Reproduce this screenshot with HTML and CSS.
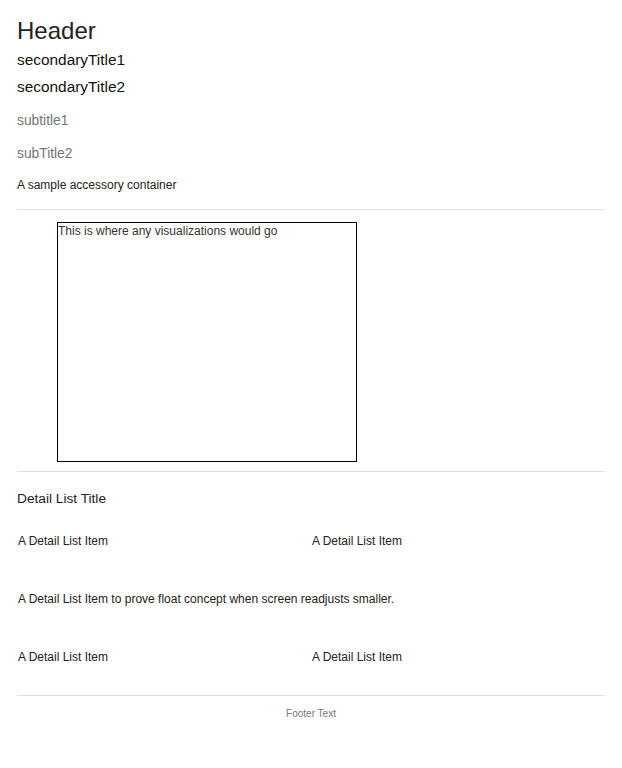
FILE: index.html
```html
<!DOCTYPE html>
<html>
<head>
<meta charset="utf-8">
<link rel="stylesheet" href="styles.css">
</head>
<body>
<div class="page">
  <header class="head">
    <h1 class="title">Header</h1>
    <div class="secondary first">secondaryTitle1</div>
    <div class="secondary">secondaryTitle2</div>
    <div class="subtitle sub1">subtitle1</div>
    <div class="subtitle sub2">subTitle2</div>
    <div class="accessory">A sample accessory container</div>
  </header>
  <hr class="rule rule-top">
  <div class="viz">This is where any visualizations would go</div>
  <hr class="rule rule-mid">
  <section class="details">
    <h2 class="detail-title">Detail List Title</h2>
    <div class="detail-list">
      <div class="item">A Detail List Item</div>
      <div class="item">A Detail List Item</div>
      <div class="item wide">A Detail List Item to prove float concept when screen readjusts smaller.</div>
      <div class="item">A Detail List Item</div>
      <div class="item">A Detail List Item</div>
    </div>
  </section>
  <hr class="rule rule-bottom">
  <footer class="footer">Footer Text</footer>
</div>
</body>
</html>
```
FILE: styles.css
```css
html, body {
  margin: 0;
  padding: 0;
  background: #fff;
}
body {
  font-family: "Liberation Sans", Arial, sans-serif;
  color: #222;
}
.page {
  padding: 17px 17px 0 17px;
}
.head {
  display: flex;
  flex-direction: column;
}
.title {
  margin: 0;
  font-size: 24px;
  font-weight: normal;
  line-height: 28px;
  color: #222;
}
.secondary {
  font-size: 15.4px;
  line-height: 27px;
  color: #111;
}
.secondary.first { margin-top: 1px; }
.subtitle {
  font-size: 13.8px;
  line-height: 20px;
  color: #757575;
}
.sub1 { margin-top: 11px; }
.sub2 { margin-top: 13px; }
.accessory {
  margin-top: 13px;
  font-size: 12px;
  line-height: 16px;
  color: #222;
}
.rule {
  border: 0;
  border-top: 1px solid #e0e0e0;
  margin: 0;
  height: 0;
}
.rule-top { margin-top: 16px; }
.viz {
  box-sizing: border-box;
  width: 300px;
  height: 240px;
  margin: 12px 0 0 40px;
  border: 1px solid #000;
  font-size: 12px;
  line-height: 16px;
  color: #333;
}
.rule-mid { margin-top: 9px; }
.detail-title {
  margin: 17px 0 0 0;
  font-size: 13.7px;
  font-weight: normal;
  line-height: 20px;
  color: #222;
}
.detail-list {
  display: grid;
  grid-template-columns: 1fr 1fr;
  row-gap: 42px;
  margin-top: 24px;
}
.item {
  padding-left: 1px;
  font-size: 12px;
  line-height: 16px;
  color: #222;
}
.item.wide {
  grid-column: 1 / span 2;
}
.rule-bottom { margin-top: 30px; }
.footer {
  margin-top: 11px;
  text-align: center;
  font-size: 10px;
  line-height: 14px;
  color: #777;
}
```
